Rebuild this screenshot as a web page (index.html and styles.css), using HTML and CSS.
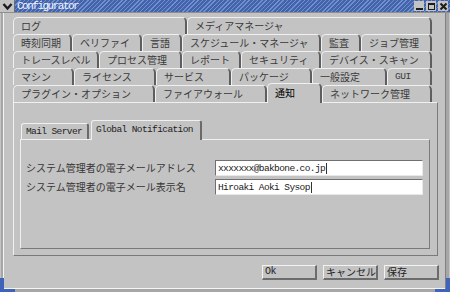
FILE: index.html
```html
<!DOCTYPE html>
<html lang="ja">
<head>
    <meta charset="UTF-8">
    <title>Configurator</title>
    <link rel="stylesheet" href="styles.css">
</head>
<body>

<div class="window">
    <div class="titlebar">
        <div class="menu-btn">
            <svg width="11" height="9" viewBox="0 0 11 9"><polyline points="1.5,2 5.5,6.5 9.5,2" fill="none" stroke="#1c1c1c" stroke-width="2.4"/></svg>
        </div>
        <div class="title">Configurator</div>
        <div class="win-controls">
            <div class="ctl"><svg width="9" height="9" viewBox="0 0 9 9"><rect x="1" y="6" width="7" height="2" fill="#1c1c1c"/></svg></div>
            <div class="ctl"><svg width="9" height="9" viewBox="0 0 9 9"><rect x="1.5" y="1.5" width="6" height="6" fill="none" stroke="#1c1c1c" stroke-width="1"/><rect x="1" y="1" width="7" height="2" fill="#1c1c1c"/></svg></div>
            <div class="ctl"><svg width="9" height="9" viewBox="0 0 9 9"><path d="M1.5 1.5 L7.5 7.5 M7.5 1.5 L1.5 7.5" stroke="#1c1c1c" stroke-width="2"/></svg></div>
        </div>
    </div>

    <div class="frame">
        <div class="tab-rows">
            <div class="tab-row row-1">
                <div class="tab">ログ</div>
                <div class="tab">メディアマネージャ</div>
            </div>
            <div class="tab-row row-2">
                <div class="tab">時刻同期</div>
                <div class="tab">ベリファイ</div>
                <div class="tab">言語</div>
                <div class="tab">スケジュール・マネージャ</div>
                <div class="tab">監査</div>
                <div class="tab">ジョブ管理</div>
            </div>
            <div class="tab-row row-3">
                <div class="tab">トレースレベル</div>
                <div class="tab">プロセス管理</div>
                <div class="tab">レポート</div>
                <div class="tab">セキュリティ</div>
                <div class="tab">デバイス・スキャン</div>
            </div>
            <div class="tab-row row-4">
                <div class="tab">マシン</div>
                <div class="tab">ライセンス</div>
                <div class="tab">サービス</div>
                <div class="tab">パッケージ</div>
                <div class="tab">一般設定</div>
                <div class="tab latin">GUI</div>
            </div>
            <div class="tab-row row-5">
                <div class="tab">プラグイン・オプション</div>
                <div class="tab">ファイアウォール</div>
                <div class="tab active">通知</div>
                <div class="tab">ネットワーク管理</div>
            </div>
        </div>

        <div class="panel">
            <div class="subtabs">
                <div class="subtab">Mail Server</div>
                <div class="subtab active">Global Notification</div>
            </div>
            <div class="subpanel">
                <div class="form-row">
                    <div class="label">システム管理者の電子メールアドレス</div>
                    <div class="field">xxxxxxx@bakbone.co.jp<span class="caret"></span></div>
                </div>
                <div class="form-row">
                    <div class="label">システム管理者の電子メール表示名</div>
                    <div class="field">Hiroaki Aoki Sysop<span class="caret"></span></div>
                </div>
            </div>
        </div>

        <div class="actions">
            <div class="btn latin">Ok</div>
            <div class="btn">キャンセル</div>
            <div class="btn">保存</div>
        </div>
    </div>

    <div class="corner corner-left"></div>
    <div class="corner corner-right"></div>
</div>

</body>
</html>
```

FILE: styles.css
```css
* {
    box-sizing: border-box;
}

body {
    margin: 0;
    background-color: #c3c3c3;
    font-family: "Noto Sans CJK JP", sans-serif;
    color: #2a2a2a;
}

.window {
    position: relative;
    width: 450px;
    height: 292px;
    background-color: #c3c3c3;
    overflow: hidden;
}

/* Title bar */
.titlebar {
    display: flex;
    height: 13px;
    background: repeating-linear-gradient(135deg, #4363ab 0 2px, #7290d0 2px 3px);
    border-bottom: 1px solid #8e8e8e;
}

.menu-btn {
    width: 15px;
    height: 12px;
    background-color: #c3c3c3;
    border-right: 1px solid #6d6d6d;
    display: flex;
    align-items: center;
    justify-content: center;
}

.title {
    flex: 1;
    padding-left: 2px;
    font-family: "Liberation Mono", monospace;
    font-size: 11px;
    letter-spacing: -1.5px;
    line-height: 12px;
    color: #f2f4ff;
}

.win-controls {
    display: flex;
    gap: 2px;
    padding: 1px 2px 0 0;
}

.ctl {
    width: 10px;
    height: 10px;
    background-color: #c3c3c3;
    display: flex;
    align-items: center;
    justify-content: center;
}

/* Window frame */
.frame {
    height: 279px;
    margin: 0 1px 0 1px;
    border-left: 2px solid #a6a6a6;
    border-right: 3px solid #a6a6a6;
    border-bottom: 3px solid #a6a6a6;
    box-shadow: inset 1px 0 0 #f4f4f4, inset -1px 0 0 #808080, inset 0 -1px 0 #f4f4f4;
    padding: 4px 8px 0 10px;
}

/* Notebook tabs */
.tab-rows {
    margin-right: 4px;
}

.tab-row {
    display: grid;
    height: 17px;
}

.row-1 { grid-template-columns: 174px 245px; }
.row-2 { grid-template-columns: 59px 70px 40px 139px 40px 71px; }
.row-3 { grid-template-columns: 86px 83px 59px 80px 111px; }
.row-4 { grid-template-columns: 61px 82px 75px 81px 75px 45px; }
.row-5 { grid-template-columns: 142px 112px 55px 110px; }

.tab {
    height: 17px;
    border-top: 1px solid #f0f0f0;
    border-left: 1px solid #f0f0f0;
    border-right: 2px solid #5e5e5e;
    border-radius: 5px 5px 0 0;
    padding-left: 7px;
    font-size: 10px;
    line-height: 15px;
    color: #3a3a3a;
    white-space: nowrap;
    overflow: hidden;
}

.tab.active {
    position: relative;
    z-index: 1;
    height: 20px;
    margin-top: -2px;
    background-color: #c3c3c3;
    color: #000;
    line-height: 18px;
}

.latin {
    font-family: "Liberation Mono", monospace;
    font-size: 9.5px;
    letter-spacing: -0.5px;
}

/* Main panel */
.panel {
    height: 154px;
    border-top: 1px solid #f0f0f0;
    border-left: 1px solid #f0f0f0;
    border-right: 1px solid #7a7a7a;
    border-bottom: 1px solid #7a7a7a;
    padding: 17px 7px 0 6px;
}

.subtabs {
    display: flex;
    align-items: flex-end;
    height: 19px;
    gap: 2px;
    padding-left: 1px;
}

.subtab {
    height: 16px;
    padding-left: 4px;
    border-top: 1px solid #f0f0f0;
    border-left: 1px solid #f0f0f0;
    border-right: 2px solid #6a6a6a;
    border-radius: 3px 3px 0 0;
    font-family: "Liberation Mono", monospace;
    font-size: 9.5px;
    letter-spacing: -0.6px;
    line-height: 15px;
    color: #1e1e1e;
}

.subtab:first-child {
    width: 68px;
}

.subtab.active {
    position: relative;
    z-index: 1;
    width: 111px;
    height: 20px;
    margin-bottom: -1px;
    background-color: #c3c3c3;
    line-height: 17px;
}

.subpanel {
    height: 110px;
    border-top: 1px solid #f0f0f0;
    border-left: 1px solid #f0f0f0;
    border-right: 1px solid #7a7a7a;
    border-bottom: 1px solid #7a7a7a;
    padding: 20px 4px 0 5px;
    display: flex;
    flex-direction: column;
    gap: 3px;
}

.form-row {
    display: flex;
    align-items: center;
}

.label {
    width: 189px;
    font-size: 10px;
    line-height: 16px;
    white-space: nowrap;
    color: #363636;
}

.field {
    width: 208px;
    height: 16px;
    background-color: #ffffff;
    border-top: 1px solid #707070;
    border-left: 1px solid #707070;
    border-right: 1px solid #e8e8e8;
    border-bottom: 1px solid #e8e8e8;
    padding-left: 2px;
    display: flex;
    align-items: center;
    font-family: "Liberation Mono", monospace;
    font-size: 9.5px;
    letter-spacing: -0.6px;
    color: #1a1a1a;
}

.caret {
    width: 1px;
    height: 11px;
    margin-left: 1px;
    background-color: #333;
}

/* Buttons */
.actions {
    display: flex;
    justify-content: flex-end;
    gap: 6px;
    margin: 9px -1px 0 0;
}

.btn {
    width: 55px;
    height: 15px;
    border-top: 1px solid #f2f2f2;
    border-left: 1px solid #f2f2f2;
    border-right: 2px solid #6c6c6c;
    border-bottom: 2px solid #6c6c6c;
    padding-left: 2px;
    font-size: 10px;
    line-height: 12px;
    color: #222;
}

/* Blue resize corners */
.corner {
    position: absolute;
    bottom: 0;
    width: 15px;
    height: 14px;
    border-bottom: 3px solid #3f63b8;
}

.corner-left {
    left: 0;
    border-left: 4px solid #3f63b8;
}

.corner-right {
    right: 0;
    border-right: 4px solid #3f63b8;
}
```
